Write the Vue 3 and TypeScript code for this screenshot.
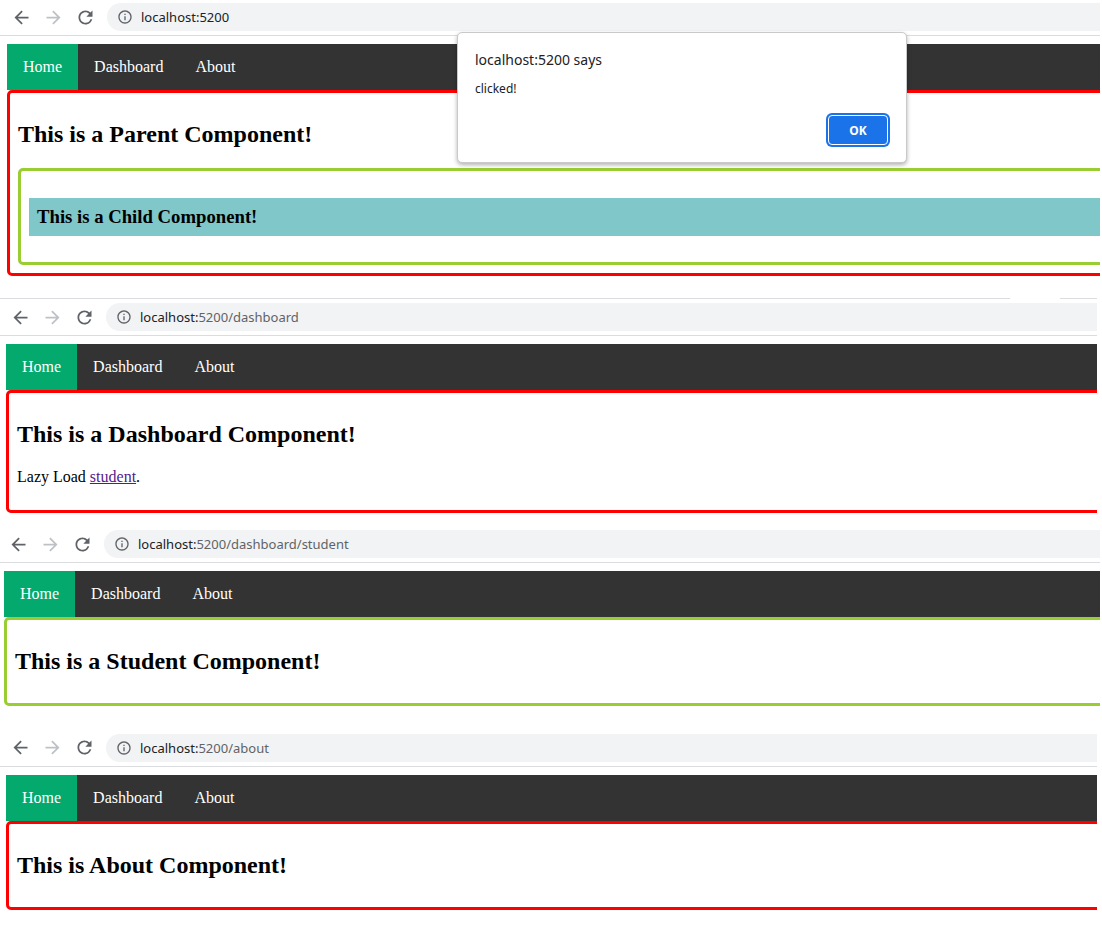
<script setup lang="ts">
interface Shot {
  key: string
  host: string
  path: string
}

const shots: Shot[] = [
  { key: 'home', host: 'localhost:5200', path: '' },
  { key: 'dashboard', host: 'localhost:', path: '5200/dashboard' },
  { key: 'student', host: 'localhost:', path: '5200/dashboard/student' },
  { key: 'about', host: 'localhost:', path: '5200/about' },
]
const links = ['Home', 'Dashboard', 'About']
const arrow = 'M20 11H7.83l5.59-5.59L12 4l-8 8 8 8 1.41-1.41L7.83 13H20v-2z'
const arrowFwd = 'M4 11h12.17l-5.59-5.59L12 4l8 8-8 8-1.41-1.41L16.17 13H4v-2z'
const reload =
  'M17.65 6.35A7.958 7.958 0 0 0 12 4c-4.42 0-7.99 3.58-7.99 8s3.57 8 7.99 8c3.73 0 6.84-2.55 7.73-6h-2.08A5.99 5.99 0 0 1 12 18c-3.31 0-6-2.69-6-6s2.69-6 6-6c1.66 0 3.14.69 4.22 1.78L13 11h7V4l-2.35 2.35z'
const info =
  'M11 7h2v2h-2zm0 4h2v6h-2zm1-9C6.48 2 2 6.48 2 12s4.48 10 10 10 10-4.48 10-10S17.52 2 12 2zm0 18c-4.41 0-8-3.59-8-8s3.59-8 8-8 8 3.59 8 8-3.59 8-8 8z'
</script>

<template>
  <div class="page">
    <section v-for="shot in shots" :key="shot.key" class="shot" :class="shot.key">
      <div v-if="shot.key === 'dashboard'" class="topline"></div>
      <div class="toolbar">
        <span class="tool"><svg viewBox="0 0 24 24" class="ico"><path :d="arrow" /></svg></span>
        <span class="tool"><svg viewBox="0 0 24 24" class="ico off"><path :d="arrowFwd" /></svg></span>
        <span class="tool"><svg viewBox="0 0 24 24" class="ico"><path :d="reload" /></svg></span>
        <div class="omnibox">
          <svg viewBox="0 0 24 24" class="info"><path :d="info" /></svg>
          <span class="url">{{ shot.host }}<span class="path">{{ shot.path }}</span></span>
        </div>
      </div>

      <nav class="topnav">
        <a v-for="(l, i) in links" :key="l" class="navlink" :class="{ active: i === 0 }">{{ l }}</a>
      </nav>

      <div v-if="shot.key === 'home'" class="box red">
        <h2>This is a Parent Component!</h2>
        <div class="box lime">
          <h3>This is a Child Component!</h3>
        </div>
      </div>
      <div v-else-if="shot.key === 'dashboard'" class="box red">
        <h2>This is a Dashboard Component!</h2>
        <p>Lazy Load <a class="visited" href="#">student</a>.</p>
      </div>
      <div v-else-if="shot.key === 'student'" class="box lime">
        <h2>This is a Student Component!</h2>
      </div>
      <div v-else class="box red">
        <h2>This is About Component!</h2>
      </div>
    </section>

    <div class="dialog">
      <div class="d-title">localhost:5200 says</div>
      <div class="d-msg">clicked!</div>
      <div class="d-actions"><button class="d-ok">OK</button></div>
    </div>
  </div>
</template>

<style scoped>
.page {
  position: relative;
  width: 1102px;
  height: 948px;
  overflow: hidden;
  background: #fff;
  font-family: "Liberation Serif", "Times New Roman", serif;
  color: #000;
}
.shot {
  overflow: hidden;
  box-sizing: border-box;
  --x: 7px;
  width: 1100px;
}
.home { --x: 7px; width: 1100px; }
.dashboard {
  --x: 6px;
  width: 1097px;
  margin-top: 22px;
}
.student { --x: 4px; width: 1100px; margin-top: 14px; }
.about { --x: 6px; width: 1097px; margin-top: 25px; }
.topline {
  height: 1px;
  margin-bottom: 1px;
  background: linear-gradient(to right, #dadce0 1010px, #fff 1010px, #fff 1060px, #dadce0 1060px);
}
.toolbar {
  display: flex;
  align-items: center;
  box-sizing: content-box;
  height: 28px;
  padding: 3px 0 4px calc(var(--x) - 2px);
  border-bottom: 1px solid #dadce0;
}
.tool {
  flex: 0 0 32px;
  height: 28px;
  display: flex;
  align-items: center;
  justify-content: center;
}
.ico {
  width: 21px;
  height: 21px;
  fill: #5f6368;
}
.ico.off {
  fill: #bdc1c6;
}
.omnibox {
  flex: 1;
  height: 28px;
  margin-left: 6px;
  padding-left: 10px;
  display: flex;
  align-items: center;
  gap: 8px;
  background: #f1f3f4;
  border-radius: 14px 0 0 14px;
}
.info {
  width: 16px;
  height: 16px;
  fill: #5f6368;
}
.url {
  font-family: "Noto Sans", "Open Sans", sans-serif;
  font-size: 13px;
  line-height: 18px;
  color: #202124;
}
.path {
  color: #5f6368;
}
.topnav {
  display: flex;
  margin: 8px 0 0 var(--x);
  background: #333;
}
.navlink {
  padding: 14px 16px;
  font-size: 16px;
  line-height: 18px;
  color: #fff;
}
.navlink.active {
  background: #04aa6d;
}
.box {
  padding: 8px;
  border-radius: 5px;
  border-width: 3px;
  border-style: solid;
  margin-right: -30px;
}
.red {
  margin-left: var(--x);
  border-color: #f00;
}
.lime {
  margin-left: var(--x);
  border-color: #9acd32;
}
.red > .lime {
  margin-left: 0;
}
h2 {
  margin: 19.92px 0;
  font-size: 24px;
  font-weight: 700;
}
h3 {
  margin: 18.72px 0;
  padding: 8px;
  font-size: 18.72px;
  font-weight: 700;
  background: #7fc7c9;
}
p {
  margin: 16px 0;
  font-size: 16px;
  line-height: 18px;
}
.visited {
  color: #551a8b;
  text-decoration: underline;
}
.dialog {
  position: absolute;
  top: 32px;
  left: 457px;
  box-sizing: border-box;
  width: 450px;
  height: 131px;
  padding: 17px 18px 0 17px;
  background: #fff;
  border: 1px solid #c9c9c9;
  border-radius: 5px;
  box-shadow: 0 2px 4px rgba(0, 0, 0, 0.3);
  font-family: "Noto Sans", "Open Sans", sans-serif;
  color: #202124;
}
.d-title {
  font-size: 14px;
  line-height: 20px;
}
.d-msg {
  margin-top: 10px;
  font-size: 12px;
  line-height: 18px;
}
.d-actions {
  display: flex;
  justify-content: flex-end;
  margin-top: 17px;
}
.d-ok {
  box-sizing: border-box;
  width: 60px;
  height: 30px;
  padding: 0;
  background: #1a73e8;
  border: 1px solid #fff;
  border-radius: 4px;
  box-shadow: 0 0 0 2px #1a73e8;
  color: #fff;
  font-family: inherit;
  font-size: 12px;
  font-weight: 700;
}
</style>
